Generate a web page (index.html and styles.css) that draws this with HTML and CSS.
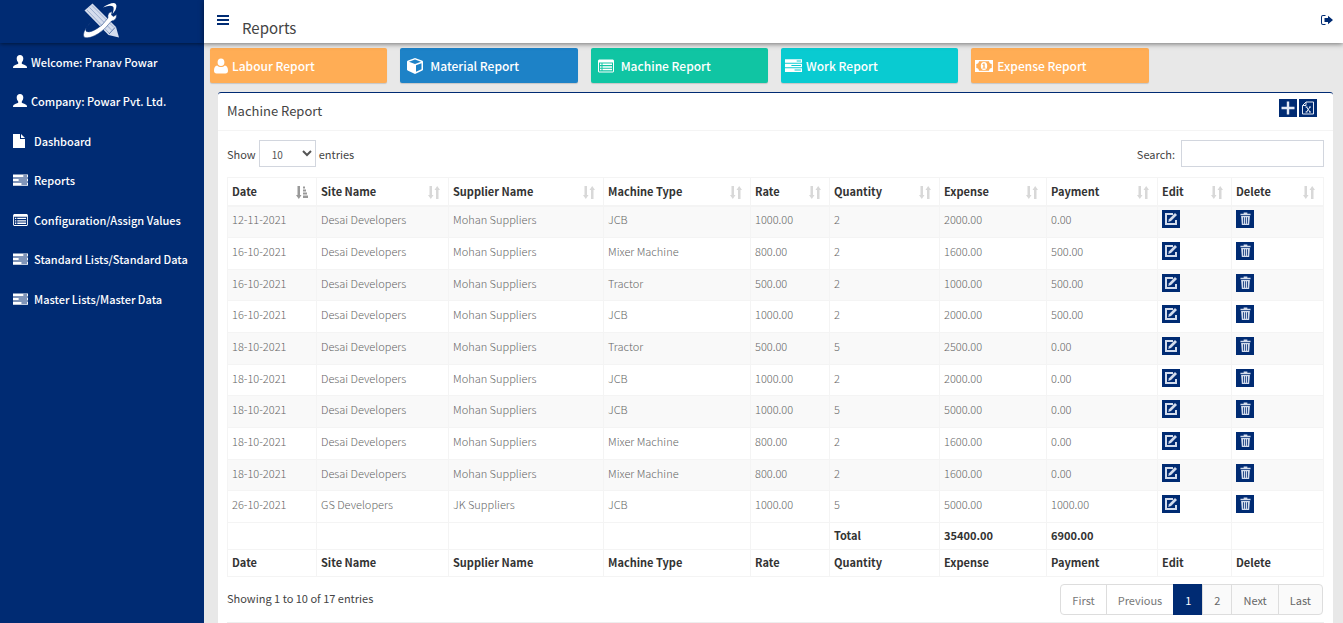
FILE: index.html
```html
<!DOCTYPE html>
<html lang="en">
<head>
  <meta charset="UTF-8" />
  <title>Machine Report</title>
  <meta name="viewport" content="width=device-width, initial-scale=1.0" />
  <link rel="stylesheet" href="styles.css">
</head>
<body>
  <!-- Icons -->
  <svg class="sprite" width="0" height="0" aria-hidden="true">
    <symbol id="i-user" viewBox="0 0 14 14"><path d="M7 0c2 0 3.300 1.400 3.300 3.600 0 1.500-.6 3-1.500 3.900v1.300c1 .6 4 1.500 4.700 2.300.4.500.5 1.300.5 1.900H0c0-.6.1-1.400.5-1.900.7-.8 3.700-1.700 4.700-2.300V7.500C4.300 6.600 3.700 5.100 3.700 3.600 3.700 1.400 5 0 7 0z"/></symbol>
    <symbol id="i-file" viewBox="0 0 12 14"><path d="M0 0h7v5h5v9H0zM8 0l4 4H8z"/></symbol>
    <symbol id="i-tasks" viewBox="0 0 16 12"><path fill-rule="evenodd" d="M0 0h16v3.300H0zM11 1.200v1h4v-1zM0 4.300h16v3.300H0zM6 5.500v1h9v-1zM0 8.700h16V12H0zM9 9.800v1h6v-1z"/></symbol>
    <symbol id="i-list" viewBox="0 0 16 13"><path fill-rule="evenodd" d="M1 0h14l1 1v11l-1 1H1l-1-1V1zM1 3v9h14V3zM2 4h1.500v1.500H2zM4.500 4H14v1.500H4.500zM2 6.700h1.500v1.500H2zM4.500 6.700H14v1.500H4.500zM2 9.300h1.500v1.500H2zM4.500 9.300H14v1.500H4.500z"/></symbol>
    <symbol id="i-person" viewBox="0 0 14 15"><path d="M3.600 3.800a3.400 3.800 0 0 1 6.800 0 3.400 3.800 0 0 1-6.800 0zM3.200 7c2 2 5.600 2 7.600 0 2.300.3 3.200 2.500 3.200 5.300 0 1.700-1 2.700-2.500 2.700h-9C1 15 0 14 0 12.300 0 9.500.9 7.300 3.200 7z"/></symbol>
    <symbol id="i-cube" viewBox="0 0 16 16"><path fill-rule="evenodd" d="M8 0l7.500 2.800.5.7v8.300l-.6.8L8 16 .6 12.600l-.6-.8V3.500l.5-.7zM8 1.500L2 3.700l6 2.300 6-2.300zM9 7.300v6.500l5.500-2.500V5.200z"/></symbol>
    <symbol id="i-money" viewBox="0 0 18 12"><path fill-rule="evenodd" d="M0 0h18v12H0zM4 1.300C4 2.800 2.800 4 1.300 4v4C2.800 8 4 9.200 4 10.700h10c0-1.500 1.200-2.700 2.700-2.700V4C15.200 4 14 2.800 14 1.300zM9 2a3.200 4 0 0 1 0 8 3.200 4 0 0 1 0-8zM8.500 3.500L7.300 4.300l.4.700.6-.2v3H7.400v.8h3.200v-.8h-.9V3.500z"/></symbol>
    <symbol id="i-bars" viewBox="0 0 12 10"><path d="M0 0h12v2H0zM0 4h12v2H0zM0 8h12v2H0z"/></symbol>
    <symbol id="i-out" viewBox="0 0 12 10"><path d="M4.500 0v1H2Q1 1 1 2v6q0 1 1 1h2.500v1H2Q0 10 0 8V2Q0 0 2 0zM7 .8L12 5 7 9.200V7H3.500V3H7z"/></symbol>
    <symbol id="i-plus" viewBox="0 0 14 14"><path d="M5.800.5h2.400v5.300h5.300v2.400H8.200v5.300H5.800V8.200H.5V5.800h5.300z"/></symbol>
    <symbol id="i-excel" viewBox="0 0 14 14"><path fill="none" stroke="currentColor" d="M5 1h7.500v12h-11V4.500zM5 1v3.500H1.500M5.500 6l3.500 5M9 6l-3.500 5M4.500 6h2M8 6h2M4.500 11h2M8 11h2"/></symbol>
    <symbol id="i-edit" viewBox="0 0 14 14"><path fill="none" stroke="currentColor" stroke-width="2" d="M9 2H2v10h10V8"/><path d="M5 7.200L11 1.100l2 2-6 6-2.800.8z"/></symbol>
    <symbol id="i-trash" viewBox="0 0 12 14"><path fill-rule="evenodd" d="M4 0h4v1.200h3.500V3H.5V1.200H4zM1.200 3.600h9.600l-.8 10H2zM3.300 5l.3 7.300h.8L4.200 5zM5.600 5v7.300h.8V5zM7.800 5l-.2 7.300h.8L8.700 5z"/></symbol>
    <symbol id="i-sort" viewBox="0 0 12 13"><path d="M1.500 0h2.500v9h1.500l-2.700 4L0 9h1.500zM8 13V4H6.500l2.700-4L12 4h-1.500v9z"/></symbol>
    <symbol id="i-sort-asc" viewBox="0 0 12 13"><path d="M1.500 0h2.500v9h1.500l-2.700 4L0 9h1.500zM7 .5h2v2H7zM7 3.500h3v2H7zM7 6.500h4v2H7zM7 9.500h5v2.500H7z"/></symbol>
  </svg>

  <aside class="sidebar">
    <div class="logo">
      <svg width="38" height="38" viewBox="0 0 38 38" aria-label="Logo">
        <!-- pencil -->
        <path d="M2.500 8.500L10.500 1.500 34 25l3 10.500-10.500-2.500z" fill="#d5dded"/>
        <path d="M5 8l22 23M7.500 5.500l22.500 23M10 3.500l22 22" stroke="#8fa2c6" stroke-width=".8" fill="none"/>
        <path d="M33 25.500l-6 6.500" stroke="#5d78ab" fill="none"/>
        <!-- orbit -->
        <path d="M21 5.500q6-4.500 11-4.500 4 1 1.500 7l-3 4q2-6 .5-7.500-3-2-10 1z" fill="#fff"/>
        <!-- wrench -->
        <path d="M9 20q-7 7-4.500 9.500 5 2 15.500-6.500l6-7q-1-5 4-6.500l-.5 3.500 2 1.500 3-2q.5 5.500-5 6.500-7 9-13 12.500-9 5.500-14 4-4-4 6.500-15.500z" fill="#fff" stroke="#002b73" stroke-width=".5"/>
      </svg>
    </div>
    <ul class="menu">
      <li><a href="#"><svg class="ico user"><use href="#i-user"/></svg>Welcome: Pranav Powar</a></li>
      <li><a href="#"><svg class="ico user"><use href="#i-user"/></svg>Company: Powar Pvt. Ltd.</a></li>
      <li><a href="#"><svg class="ico file"><use href="#i-file"/></svg>Dashboard</a></li>
      <li><a href="#"><svg class="ico"><use href="#i-tasks"/></svg>Reports</a></li>
      <li><a href="#"><svg class="ico"><use href="#i-list"/></svg>Configuration/Assign Values</a></li>
      <li><a href="#"><svg class="ico"><use href="#i-tasks"/></svg>Standard Lists/Standard Data</a></li>
      <li><a href="#"><svg class="ico"><use href="#i-tasks"/></svg>Master Lists/Master Data</a></li>
    </ul>
  </aside>

  <div class="main">
    <header class="topbar">
      <button class="toggle" aria-label="Menu"><svg width="12" height="10"><use href="#i-bars"/></svg></button>
      <h1>Reports</h1>
      <a class="logout" href="#" aria-label="Logout"><svg width="12" height="10"><use href="#i-out"/></svg></a>
    </header>

    <nav class="reports">
      <a class="orange" href="#"><svg width="14" height="16"><use href="#i-person"/></svg>Labour Report</a>
      <a class="blue" href="#"><svg width="16" height="16"><use href="#i-cube"/></svg>Material Report</a>
      <a class="green" href="#"><svg width="16" height="14"><use href="#i-list"/></svg>Machine Report</a>
      <a class="cyan" href="#"><svg width="17" height="13"><use href="#i-tasks"/></svg>Work Report</a>
      <a class="orange" href="#"><svg width="18" height="12"><use href="#i-money"/></svg>Expense Report</a>
    </nav>

    <section class="box">
      <div class="box-header">
        <h2>Machine Report</h2>
        <div class="tools">
          <button class="btn-ico" aria-label="Add"><svg width="14" height="14"><use href="#i-plus"/></svg></button>
          <button class="btn-ico" aria-label="Excel"><svg width="14" height="14"><use href="#i-excel"/></svg></button>
        </div>
      </div>

      <div class="box-body">
        <div class="filters">
          <label>Show
            <select>
              <option>10</option>
              <option>25</option>
              <option>50</option>
              <option>100</option>
            </select>
            entries</label>
          <label>Search: <input type="search" /></label>
        </div>

        <table>
          <colgroup>
            <col class="c-date"><col class="c-site"><col class="c-supplier"><col class="c-type"><col class="c-rate">
            <col class="c-qty"><col class="c-expense"><col class="c-payment"><col class="c-edit"><col class="c-delete">
          </colgroup>
          <thead><tr id="headings"></tr></thead>
          <tbody id="rows"></tbody>
          <tfoot>
            <tr><th></th><th></th><th></th><th></th><th></th><th>Total</th><th>35400.00</th><th>6900.00</th><th></th><th></th></tr>
            <tr><th>Date</th><th>Site Name</th><th>Supplier Name</th><th>Machine Type</th><th>Rate</th><th>Quantity</th><th>Expense</th><th>Payment</th><th>Edit</th><th>Delete</th></tr>
          </tfoot>
        </table>

        <div class="table-footer">
          <div>Showing 1 to 10 of 17 entries</div>
          <div class="pagination">
            <button class="disabled">First</button>
            <button class="disabled">Previous</button>
            <button class="active">1</button>
            <button>2</button>
            <button>Next</button>
            <button>Last</button>
          </div>
        </div>
        <hr>
      </div>
    </section>
  </div>

  <script>
    const columns = ["Date", "Site Name", "Supplier Name", "Machine Type", "Rate", "Quantity", "Expense", "Payment", "Edit", "Delete"];
    const desai = ["Desai Developers", "Mohan Suppliers"];
    const data = [
      ["12-11-2021", ...desai, "JCB", "1000.00", 2, "2000.00", "0.00"],
      ["16-10-2021", ...desai, "Mixer Machine", "800.00", 2, "1600.00", "500.00"],
      ["16-10-2021", ...desai, "Tractor", "500.00", 2, "1000.00", "500.00"],
      ["16-10-2021", ...desai, "JCB", "1000.00", 2, "2000.00", "500.00"],
      ["18-10-2021", ...desai, "Tractor", "500.00", 5, "2500.00", "0.00"],
      ["18-10-2021", ...desai, "JCB", "1000.00", 2, "2000.00", "0.00"],
      ["18-10-2021", ...desai, "JCB", "1000.00", 5, "5000.00", "0.00"],
      ["18-10-2021", ...desai, "Mixer Machine", "800.00", 2, "1600.00", "0.00"],
      ["18-10-2021", ...desai, "Mixer Machine", "800.00", 2, "1600.00", "0.00"],
      ["26-10-2021", "GS Developers", "JK Suppliers", "JCB", "1000.00", 5, "5000.00", "1000.00"]
    ];
    const button = (label, icon, w) =>
      `<td><button class="btn-ico" aria-label="${label}"><svg width="${w}" height="14"><use href="#${icon}"/></svg></button></td>`;

    document.getElementById("headings").innerHTML = columns.map((c, i) =>
      `<th><div class="sortable">${c}<svg class="${i ? "" : "sorted"}" width="12" height="13"><use href="#${i ? "i-sort" : "i-sort-asc"}"/></svg></div></th>`).join("");

    document.getElementById("rows").innerHTML = data.map(r =>
      "<tr>" + r.map(v => `<td>${v}</td>`).join("") + button("Edit", "i-edit", 14) + button("Delete", "i-trash", 11) + "</tr>").join("");
  </script>
</body>
</html>
```

FILE: styles.css
```css
* { box-sizing: border-box; }
body {
  margin: 0;
  display: flex;
  height: 100vh;
  overflow: hidden;
  background: #e8e8e8;
  color: #444;
  font-family: "Noto Sans CJK SC", "Open Sans", sans-serif;
  font-size: 11px;
  line-height: 18px;
}
a { color: inherit; text-decoration: none; }
button, input, select { font-family: inherit; }
button { cursor: pointer; }
svg { fill: currentColor; flex: none; }
.sprite { position: absolute; }

/* Sidebar */
.sidebar {
  width: 204px;
  flex: none;
  background: #002b73;
  color: #fff;
}
.logo {
  height: 43px;
  padding: 2px 0 0 82px;
  box-shadow: 0 1px 4px rgba(0,0,0,0.5);
}
.logo svg { display: block; }
.menu {
  list-style: none;
  margin: 0;
  padding: 0;
}
.menu a {
  display: flex;
  align-items: center;
  gap: 6px;
  height: 39px;
  padding: 0 0 2px 13px;
  font-weight: 500;
}
.menu li:nth-child(even) { padding-bottom: 1px; }
.ico { width: 15px; height: 12px; }
.ico.user { width: 14px; height: 14px; margin-right: -2px; }
.ico.file { width: 12px; height: 14px; margin-right: 3px; }

/* Top bar */
.main {
  flex: 1;
  min-width: 0;
}
.topbar {
  position: relative;
  display: flex;
  align-items: center;
  height: 43px;
  padding: 0 10px 0 13px;
  background: #fff;
  box-shadow: 0 1px 5px rgba(0,0,0,0.5);
}
.topbar h1 {
  flex: 1;
  margin: 13px 0 0 13px;
  font-size: 15px;
  font-weight: 400;
}
.toggle, .logout {
  border: none;
  background: none;
  padding: 0 0 3px;
  color: #002b73;
  line-height: 0;
}

/* Report links */
.reports {
  display: grid;
  grid-template-columns: repeat(6, 1fr);
  gap: 13px;
  padding: 5px 4px 9px 6px;
}
.reports a {
  display: flex;
  align-items: center;
  gap: 4px;
  height: 35px;
  padding-left: 4px;
  border-radius: 2px;
  box-shadow: 0 1px 1px rgba(0,0,0,0.15);
  color: #fff;
  font-size: 12px;
  font-weight: 500;
}
.reports .orange { background: #ffad55; }
.reports .blue { background: #1d82c7; }
.reports .green { background: #10c5a3; }
.reports .cyan { background: #09cbd1; }
.reports .blue, .reports .green { gap: 7px; padding-left: 7px; }

/* Box */
.box {
  margin: 0 10px 0 14px;
  min-height: 540px;
  background: #fff;
  border-top: 1px solid #002b73;
  border-radius: 3px 3px 0 0;
}
.box-header {
  display: flex;
  justify-content: space-between;
  height: 38px;
  padding: 6px 16px 0 9px;
  border-bottom: 1px solid #f4f4f4;
}
.box-header h2 {
  margin: 0;
  font-size: 13px;
  font-weight: 400;
  line-height: 24px;
}
.tools { display: flex; gap: 2px; }
.btn-ico {
  display: flex;
  align-items: center;
  justify-content: center;
  width: 18px;
  height: 18px;
  padding: 0;
  border: none;
  background: #002b73;
  color: #e4eaf5;
}
.box-body { padding: 9px 9px 0; }
.filters {
  display: flex;
  justify-content: space-between;
  margin-bottom: 10px;
}
.filters label {
  display: flex;
  align-items: center;
  gap: 3px;
  line-height: 16px;
}
.filters select, .filters input {
  height: 27px;
  border: 1px solid #d2d6de;
  background: #fff;
  color: #555;
}
.filters select {
  width: 57px;
  padding: 5px 8px;
  font-size: 10px;
}
.filters input { width: 143px; margin-left: 3px; }

/* Table */
table {
  width: 100%;
  table-layout: fixed;
  border-collapse: collapse;
}
.c-date { width: 89px; }
.c-site { width: 132px; }
.c-supplier { width: 155px; }
.c-type { width: 147px; }
.c-rate { width: 79px; }
.c-qty { width: 110px; }
.c-expense { width: 107px; }
.c-payment { width: 111px; }
.c-edit { width: 74px; }
.c-delete { width: 92px; }
th, td {
  padding: 0 5px 0 4px;
  border: 1px solid #f4f4f4;
  text-align: left;
}
th {
  height: 27px;
  color: #333;
  font-weight: 700;
}
thead th { height: 28px; border-bottom-width: 2px; }
tfoot th { padding-bottom: 2px; }
.sortable {
  display: flex;
  justify-content: space-between;
  align-items: center;
}
.sortable svg { margin: 3px 3px 0 0; color: #d8d8d8; }
.sortable .sorted { color: #999; }
tbody td {
  height: 32px;
  padding-bottom: 5px;
  color: #666;
  font-weight: 300;
}
tbody tr:nth-child(3n) td { height: 31px; }
tbody tr:nth-child(odd) { background: #f9f9f9; }
td .btn-ico { color: #d3dcec; }

/* Table footer */
.table-footer {
  display: flex;
  justify-content: space-between;
  padding: 7px 1px 0 0;
}
.table-footer > div:first-child { padding-top: 5px; }
.pagination { display: flex; }
.pagination button {
  height: 31px;
  margin-left: -1px;
  padding: 0 11px;
  border: 1px solid #ddd;
  background: #fafafa;
  color: #666;
  font-size: 11px;
}
.pagination .disabled { background: #fff; color: #777; }
.pagination .active {
  background: #002b73;
  border-color: #002b73;
  color: #fff;
}
.pagination button:first-child { border-radius: 4px 0 0 4px; }
.pagination button:last-child { border-radius: 0 4px 4px 0; }
hr {
  margin: 7px 0;
  border: none;
  border-top: 1px solid #eee;
}
```
